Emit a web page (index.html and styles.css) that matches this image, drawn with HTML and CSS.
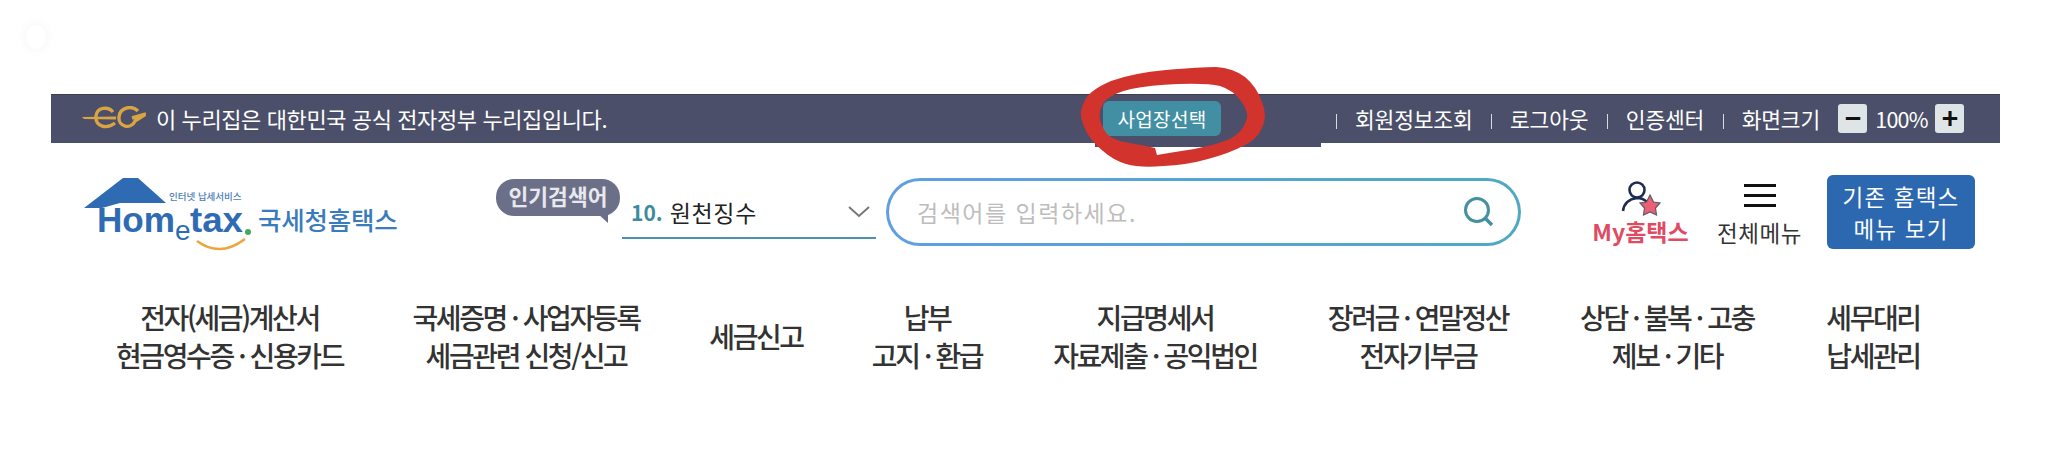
FILE: index.html
```html
<!DOCTYPE html>
<html lang="ko">
  <head>
    <meta charset="UTF-8" />
    <title>국세청 홈택스</title>
    <link rel="stylesheet" href="styles.css">
  </head>
  <body>
    <div class="glow-dot"></div>

    <div class="gov-bar">
      <div class="gov-notice">
        <svg class="eg-logo" viewBox="0 0 64 24" width="64" height="24">
          <path d="M0 11 L34 10.5 L34 13.5 L2 13 Z" fill="#d9a441" />
          <path d="M31 6 C26 0 15 1 14 10 C13 20 24 24 33 17" stroke="#d9a441" stroke-width="3.4" fill="none" />
          <path d="M56 5 C50 -1 38 1 37 11 C36 21 49 24 53 15 L64 8 L50 12" stroke="#d9a441" stroke-width="3.4" fill="none" />
        </svg>
        <span>이 누리집은 대한민국 공식 전자정부 누리집입니다.</span>
      </div>

      <div class="biz-tab">
        <button class="biz-btn">사업장선택</button>
      </div>

      <div class="util-links">
        <a class="util-link">회원정보조회</a>
        <a class="util-link">로그아웃</a>
        <a class="util-link">인증센터</a>
        <a class="util-link">화면크기</a>
        <span class="zoom-btn">−</span>
        <span class="zoom-val">100%</span>
        <span class="zoom-btn">+</span>
      </div>
    </div>

    <div class="header">
      <svg class="logo" viewBox="0 0 320 80" width="320" height="80">
        <path d="M4 36 L43 6 H58 L86 31 H40 L22 36 Z" fill="#2f6bb2" />
        <text x="89" y="28" class="logo-small">인터넷 납세서비스</text>
        <text x="17" y="60" class="logo-main" textLength="78" lengthAdjust="spacingAndGlyphs">Hom</text>
        <text x="95" y="68" class="logo-e">e</text>
        <text x="110" y="60" class="logo-main" textLength="53" lengthAdjust="spacingAndGlyphs">tax</text>
        <circle cx="168" cy="60" r="3" fill="#45a85a" />
        <path d="M117 69 Q140 86 165 67" stroke="#eba63c" stroke-width="2.5" fill="none" />
        <text x="178" y="58" class="logo-name">국세청홈택스</text>
      </svg>

      <div class="popular-tag">인기검색어</div>

      <div class="popular-select">
        <span class="rank">10.</span>
        <span>원천징수</span>
        <svg class="chevron" viewBox="0 0 22 12" width="22" height="12">
          <path d="M1 1 L11 10 L21 1" stroke="#777" stroke-width="2" fill="none" />
        </svg>
      </div>

      <div class="search">
        <div class="search-inner">
          <span class="placeholder">검색어를 입력하세요.</span>
          <svg viewBox="0 0 34 34" width="34" height="34">
            <circle cx="15" cy="15" r="11.5" stroke="#45919f" stroke-width="3" fill="none" />
            <path d="M23 23 L30 30" stroke="#45919f" stroke-width="3.5" fill="none" />
          </svg>
        </div>
      </div>

      <div class="my-menu">
        <svg viewBox="0 0 40 36" width="40" height="36">
          <circle cx="16" cy="10" r="7.5" stroke="#1e2b52" stroke-width="2.6" fill="none" />
          <path d="M2 31 C3 22 9 19 16 18 C20 18 24 20 26 22" stroke="#1e2b52" stroke-width="2.6" fill="none" />
          <path d="M29 15 L32.5 22 L39 23 L34.5 28 L35.5 35 L29 32 L22.5 35 L23.5 28 L19 23 L25.5 22 Z" fill="#ec5f75" stroke="#5b5b66" stroke-width="1.2" />
        </svg>
        <span class="my-label">My홈택스</span>
      </div>

      <div class="all-menu">
        <div class="burger"><i></i><i></i><i></i></div>
        <span>전체메뉴</span>
      </div>

      <button class="old-menu">기존 홈택스<br />메뉴 보기</button>
    </div>

    <div class="nav">
      <a>전자(세금)계산서<br />현금영수증 · 신용카드</a>
      <a>국세증명 · 사업자등록<br />세금관련 신청/신고</a>
      <a>세금신고</a>
      <a>납부<br />고지 · 환급</a>
      <a>지급명세서<br />자료제출 · 공익법인</a>
      <a>장려금 · 연말정산<br />전자기부금</a>
      <a>상담 · 불복 · 고충<br />제보 · 기타</a>
      <a>세무대리<br />납세관리</a>
    </div>

    <!-- red marker scribble drawn over the page -->
    <svg class="scribble" viewBox="0 0 2068 466" width="2068" height="466">
      <path fill="#d2332d" fill-rule="evenodd" d="M1081 116 Q1080 110 1085 100 Q1090 90 1111 81 Q1133 73 1166 70 Q1200 67 1216 67 Q1233 68 1245 77 Q1257 87 1262 102 Q1268 117 1262 128 Q1257 140 1243 146 Q1230 153 1208 159 Q1187 165 1163 166 Q1140 168 1126 164 Q1113 160 1103 151 Q1093 143 1087 133 Q1082 123 1081 116 Z
        M1100 120 Q1098 110 1105 101 Q1113 93 1131 89 Q1150 85 1178 84 Q1207 83 1220 86 Q1233 90 1241 101 Q1250 113 1246 121 Q1243 130 1236 135 Q1230 140 1212 145 Q1193 150 1175 152 L1157 155 L1155 148 Q1147 146 1130 143 Q1113 140 1108 135 Q1103 130 1100 120 Z" />
    </svg>
  </body>
</html>
```

FILE: styles.css
```css
* {
  box-sizing: border-box;
}
body {
  margin: 0;
  width: 2068px;
  height: 466px;
  overflow: hidden;
  background: #fff;
  font-family: "Noto Sans CJK KR", "Noto Sans", sans-serif;
  color: #222;
  position: relative;
}
.glow-dot {
  position: absolute;
  left: 26px;
  top: 25px;
  width: 20px;
  height: 24px;
  border-radius: 50%;
  background: #fff;
  box-shadow: 0 0 12px rgba(0, 0, 0, 0.05);
}
.scribble {
  position: absolute;
  left: 0;
  top: 0;
}

/* top government bar */
.gov-bar {
  display: flex;
  align-items: flex-start;
  margin: 94px 0 0 51px;
  width: 1949px;
  height: 49px;
  background: #4b4f69;
  border-top: 1px solid #3d3f4c;
  color: #fff;
}
.gov-notice {
  display: flex;
  align-items: center;
  gap: 10px;
  width: 1044px;
  height: 48px;
  padding: 0 0 2px 31px;
  font-size: 22px;
  letter-spacing: -0.4px;
}
.biz-tab {
  width: 226px;
  height: 52px;
  background: #4b4f69;
  padding: 6px 0 0 8px;
}
.biz-btn {
  display: block;
  width: 118px;
  height: 35px;
  background: #428fa3;
  color: #fff;
  border: none;
  border-radius: 6px;
  padding: 0;
  font-family: inherit;
  font-size: 19px;
  letter-spacing: 0.3px;
}
.util-links {
  display: flex;
  align-items: center;
  height: 48px;
  padding: 0 0 2px 15px;
  font-size: 21.5px;
  letter-spacing: -0.2px;
}
.util-link {
  margin-right: 18.5px;
}
.util-link::before {
  content: "";
  display: inline-block;
  width: 1px;
  height: 15px;
  margin-right: 18px;
  background: #d8dae2;
  vertical-align: -1px;
}
.zoom-btn {
  width: 29px;
  height: 29px;
  background: #dfe5e6;
  color: #111;
  border-radius: 3px;
  font-size: 28px;
  font-weight: 700;
  line-height: 27px;
  text-align: center;
}
.zoom-val {
  width: 68px;
  text-align: center;
  letter-spacing: -0.8px;
}

/* logo, search, shortcuts */
.header {
  display: flex;
  align-items: flex-start;
  height: 122px;
  padding-left: 80px;
}
.logo {
  flex: none;
  margin-top: 29px;
}
.logo-small {
  font-size: 9.5px;
  fill: #4c7dbb;
  font-weight: 500;
}
.logo-main {
  font-family: "Liberation Sans", sans-serif;
  font-size: 35px;
  font-weight: 700;
  fill: #2f6bb2;
}
.logo-e {
  font-family: "Liberation Sans", sans-serif;
  font-size: 28px;
  fill: #2f6bb2;
}
.logo-name {
  font-size: 25.5px;
  font-weight: 500;
  fill: #3a7bbd;
  letter-spacing: -0.2px;
}
.popular-tag {
  position: relative;
  flex: none;
  width: 124px;
  height: 37px;
  margin: 36px 0 0 96px;
  background: #6b7088;
  border-radius: 18px;
  color: #e8e9ee;
  font-size: 21.5px;
  font-weight: 700;
  line-height: 34px;
  text-align: center;
}
.popular-tag::after {
  content: "";
  position: absolute;
  right: 12px;
  bottom: -7px;
  border-top: 9px solid #6b7088;
  border-left: 10px solid transparent;
}
.popular-select {
  flex: none;
  display: flex;
  align-items: center;
  gap: 7px;
  width: 254px;
  height: 49px;
  margin: 47px 0 0 2px;
  padding: 0 6px 3px 9px;
  border-bottom: 2px solid #4a94a8;
  font-size: 23px;
  letter-spacing: 0.7px;
}
.rank {
  color: #3d8c9e;
  font-size: 21px;
  font-weight: 700;
  letter-spacing: 0;
}
.chevron {
  margin-left: auto;
}
.search {
  flex: none;
  width: 635px;
  height: 68px;
  margin: 35px 0 0 10px;
  padding: 3px;
  border-radius: 34px;
  background: linear-gradient(90deg, #5f9fe2, #4fa9c2);
}
.search-inner {
  display: flex;
  align-items: center;
  justify-content: space-between;
  height: 100%;
  padding: 0 22px 0 28px;
  border-radius: 31px;
  background: #fff;
}
.placeholder {
  color: #bdbdbd;
  font-size: 23px;
  letter-spacing: 1.5px;
}
.my-menu,
.all-menu {
  flex: none;
  display: flex;
  flex-direction: column;
  align-items: center;
  height: 80px;
}
.my-menu {
  width: 99px;
  margin: 37px 0 0 70px;
  font-size: 23px;
}
.my-label {
  color: #e04b63;
  font-weight: 700;
  line-height: 30px;
  white-space: nowrap;
}
.all-menu {
  width: 87px;
  margin: 41px 0 0 26px;
  color: #333;
  font-size: 22.5px;
  letter-spacing: 0.6px;
}
.burger {
  display: flex;
  flex-direction: column;
  gap: 7px;
  flex: none;
  width: 32px;
  height: 32px;
}
.burger i {
  display: block;
  height: 3px;
  background: #111;
}
.old-menu {
  flex: none;
  width: 148px;
  height: 74px;
  margin: 32px 0 0 24px;
  padding: 0;
  border: none;
  border-radius: 6px;
  background: #2b68b0;
  color: #fff;
  font-family: inherit;
  font-size: 22.5px;
  line-height: 32px;
  letter-spacing: 1.2px;
}

/* main navigation */
.nav {
  display: grid;
  grid-template-columns: 259px 334px 126px 216px 240px 286px 212px 200px;
  align-items: center;
  margin: 33px 0 0 100px;
}
.nav a {
  font-size: 28px;
  font-weight: 500;
  line-height: 38px;
  letter-spacing: -2.4px;
  text-align: center;
  color: #333;
}
```
